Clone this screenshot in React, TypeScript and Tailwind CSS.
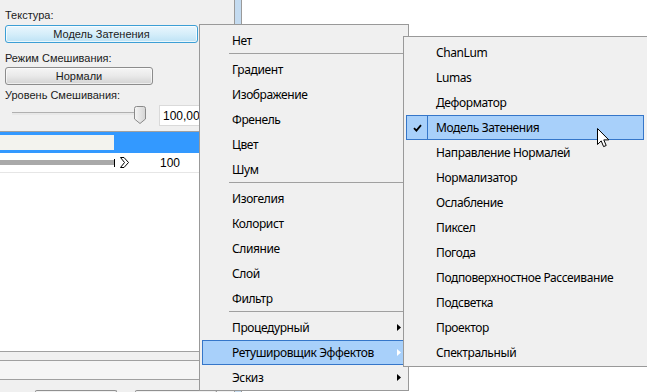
import React from "react";

const mainGroups: string[][] = [
  ["Нет"],
  ["Градиент", "Изображение", "Френель", "Цвет", "Шум"],
  ["Изогелия", "Колорист", "Слияние", "Слой", "Фильтр"],
];

const subItems = [
  "ChanLum",
  "Lumas",
  "Деформатор",
  "Модель Затенения",
  "Направление Нормалей",
  "Нормализатор",
  "Ослабление",
  "Пиксел",
  "Погода",
  "Подповерхностное Рассеивание",
  "Подсветка",
  "Проектор",
  "Спектральный",
];

function Arrow({ white = false }: { white?: boolean }) {
  return (
    <svg width="4" height="7" viewBox="0 0 4 7" className="shrink-0">
      <path d="M0 0 L4 3.5 L0 7 Z" fill={white ? "#ffffff" : "#000000"} />
    </svg>
  );
}

function MenuItem({ label }: { label: string }) {
  return <div className="h-[25px] flex items-center pl-[32px]">{label}</div>;
}

function Separator() {
  return <div className="ml-[29px] mr-[4px] h-px bg-[#a0a0a0] mb-[3px]" />;
}

function Cursor() {
  return (
    <svg
      width="13"
      height="20"
      viewBox="0 0 13 20"
      className="absolute left-[597px] top-[128px]"
    >
      <path
        d="M0.5 0.5 L0.5 16.5 L4.2 12.9 L6.6 18.6 L9.2 17.5 L6.8 11.9 L11.8 11.9 Z"
        fill="#ffffff"
        stroke="#000000"
        strokeWidth="1"
        strokeLinejoin="miter"
      />
    </svg>
  );
}

export default function App() {
  return (
    <div className="relative w-[647px] h-[392px] overflow-hidden bg-white flex font-['Liberation_Sans',Arial,sans-serif] text-[11px] text-[#1b1b1b]">
      {/* left panel */}
      <div className="w-[234px] h-full flex flex-col bg-[#f0f0f0] shrink-0">
        <div className="h-[131px] px-[5px] pt-[8px] flex flex-col items-start">
          <div className="leading-[14px]">Текстура:</div>
          <div className="mt-[3px] w-[193px] h-[18px] rounded-[3px] border border-[#3c9fd5] bg-linear-to-b from-[#e9f6fd] via-[#d6eefa] to-[#bde2f5] shadow-[inset_0_0_0_1px_rgba(255,255,255,0.7)] flex items-center justify-center leading-none">
            Модель Затенения
          </div>
          <div className="mt-[8px] leading-[14px]">Режим Смешивания:</div>
          <div className="mt-[2px] w-[148px] h-[18px] rounded-[3px] border border-[#8c8c8c] bg-linear-to-b from-[#f5f5f5] via-[#e9e9e9] to-[#d3d3d3] shadow-[inset_0_0_0_1px_rgba(255,255,255,0.6)] flex items-center justify-center leading-none">
            Нормали
          </div>
          <div className="mt-[3px] leading-[14px]">Уровень Смешивания:</div>
          <div className="mt-[2px] h-[22px] flex items-start">
            <div className="ml-[7px] mt-[8px] w-[128px] h-[3px] border-t border-[#b0b0b0] bg-[#e8e8e8]" />
            <svg width="12" height="18" viewBox="0 0 12 18" className="-ml-[6px] mt-[2px]">
              <defs>
                <linearGradient id="thumb" x1="0" y1="0" x2="1" y2="0">
                  <stop offset="0" stopColor="#f6f6f6" />
                  <stop offset="1" stopColor="#d4d4d4" />
                </linearGradient>
              </defs>
              <path
                d="M2.5 0.5 L9.5 0.5 Q11.5 0.5 11.5 2.5 L11.5 13 L6 17.5 L0.5 13 L0.5 2.5 Q0.5 0.5 2.5 0.5 Z"
                fill="url(#thumb)"
                stroke="#8a8a8a"
              />
            </svg>
            <div className="ml-[13px] mt-px w-[80px] h-[21px] bg-white border border-[#dadada] flex items-center pl-[3px] text-[12px] text-black">
              100,00
            </div>
          </div>
        </div>
        <div className="h-px bg-[#a0a0a0]" />
        <div className="h-[21px] bg-[#3399ff] pt-[3px]">
          <div className="w-[114px] h-[15px] bg-[#f3f3ee]" />
        </div>
        <div className="h-[20px] bg-white flex items-center border-b border-[#e6e6e6]">
          <div className="w-[114px] h-[5px] bg-[#a9a9a9]" />
          <div className="w-px h-[8px] bg-black" />
          <svg width="9" height="11" viewBox="0 0 9 11" className="ml-[5px]">
            <path d="M0.5 0.5 L4 0.5 L8.5 5.5 L4 10.5 L0.5 10.5 L4.5 5.5 Z" fill="#ffffff" stroke="#000000" />
          </svg>
          <div className="ml-[31px] text-[12px] text-black">100</div>
        </div>
        <div className="flex-1 bg-white" />
        <div className="h-px bg-[#a0a0a0]" />
        <div className="h-[8px] bg-[#f0f0f0]" />
        <div className="h-px bg-[#a0a0a0]" />
        <div className="h-[18px] bg-[#f5f5f5]" />
        <div className="h-px bg-[#a0a0a0]" />
        <div className="h-[12px] bg-[#f0f0f0] flex items-end">
          <div className="ml-[35px] w-[82px] h-[2px] border-t border-x border-[#909090] rounded-t-[3px]" />
          <div className="ml-[18px] w-[82px] h-[2px] border-t border-x border-[#909090] rounded-t-[3px]" />
        </div>
      </div>
      {/* scrollbar strip */}
      <div className="w-[8px] h-full bg-[#c4dbf0] border-x border-[#9a9a9a] shrink-0" />
      <div className="flex-1 bg-white" />

      {/* main context menu */}
      <div className="absolute left-[199px] top-[24px] w-[210px] h-[367px] border border-[#999999] bg-[#f0f0f0] pt-[3px] font-['Noto_Sans',sans-serif] text-[12px] tracking-[-0.4px] text-black">
        {mainGroups.map((group, gi) => (
          <div key={gi}>
            {group.map((label) => (
              <MenuItem key={label} label={label} />
            ))}
            <Separator />
          </div>
        ))}
        <div className="h-[25px] flex items-center justify-between pl-[32px] pr-[7px]">
          <span>Процедурный</span>
          <Arrow />
        </div>
        <div className="h-[25px] mx-[2px] flex items-center justify-between pl-[29px] pr-[4px] bg-[#a8d0fa] border border-[#3576c9]">
          <span>Ретушировщик Эффектов</span>
          <Arrow white />
        </div>
        <div className="h-[25px] flex items-center justify-between pl-[32px] pr-[7px]">
          <span>Эскиз</span>
          <Arrow />
        </div>
      </div>

      {/* submenu */}
      <div className="absolute left-[403px] top-[36px] w-[245px] h-[331px] border border-[#999999] bg-[#f0f0f0] pt-[3px] font-['Noto_Sans',sans-serif] text-[12px] tracking-[-0.4px] text-black">
        {subItems.map((label) =>
          label === "Модель Затенения" ? (
            <div key={label} className="h-[25px] ml-[2px] mr-[3px] flex">
              <div className="w-[22px] h-full border border-[#3576c9] bg-[#a8d0fa] flex items-center justify-center">
                <svg width="9" height="8" viewBox="0 0 9 8">
                  <path d="M1 4.2 L3.4 6.6 L8 1.2" fill="none" stroke="#000000" strokeWidth="1.8" />
                </svg>
              </div>
              <div className="flex-1 h-full border border-l-0 border-[#3576c9] bg-[#a8d0fa] flex items-center pl-[8px]">
                {label}
              </div>
            </div>
          ) : (
            <MenuItem key={label} label={label} />
          )
        )}
      </div>

      <Cursor />
    </div>
  );
}
